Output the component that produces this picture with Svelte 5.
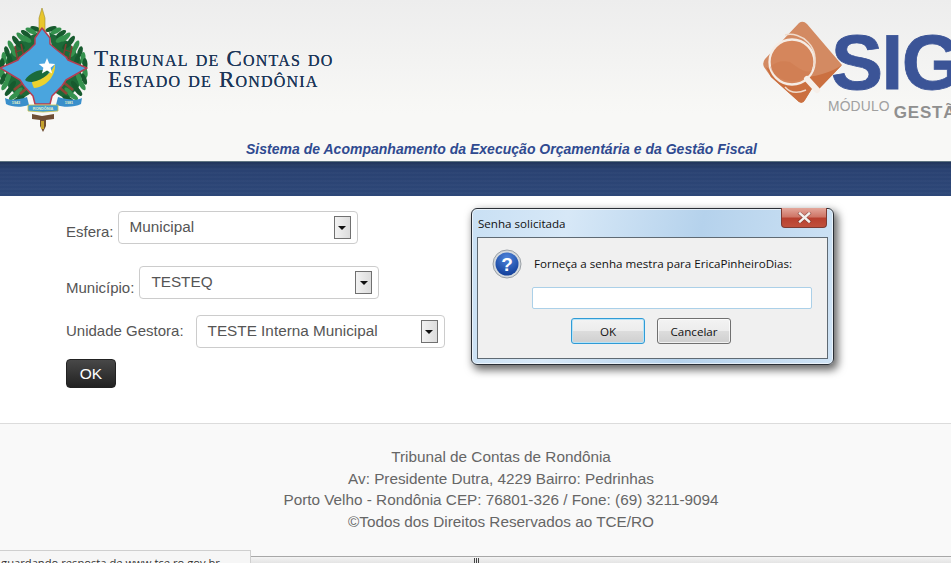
<script>
  const fields = [
    { label: 'Esfera:', value: 'Municipal', cls: 'esfera' },
    { label: 'Município:', value: 'TESTEQ', cls: 'municipio' },
    { label: 'Unidade Gestora:', value: 'TESTE Interna Municipal', cls: 'unidade' }
  ];
  const lines = [
    'Tribunal de Contas de Rondônia',
    'Av: Presidente Dutra, 4229 Bairro: Pedrinhas',
    'Porto Velho - Rondônia CEP: 76801-326 / Fone: (69) 3211-9094',
    '©Todos dos Direitos Reservados ao TCE/RO'
  ];
  // wreath leaves along the left branch; the right branch mirrors them
  const spine = [
    [36, 29, 200], [31, 31, 205], [26, 34, 215], [21, 37, 225], [16, 41, 235], [11, 46, 245],
    [7, 52, 255], [4, 58, 265], [2, 64, 272], [2, 72, 280], [3, 79, 290], [5, 85, 300],
    [9, 91, 310], [14, 96, 325], [19, 99, 335],
    [26, 39, 30], [20, 45, 40], [14, 52, 60], [10, 60, 75], [8, 78, 110], [12, 86, 125], [18, 92, 135]
  ];
</script>

{#snippet branch()}
  <path d="M38 32L18 42L6 60L6 84L20 100L36 90L30 70L36 42Z" fill="#1d6a38"/>
  {#each spine as s, i}
    <ellipse cx={s[0]} cy={s[1]} rx="6" ry="2.500" transform="rotate({s[2]} {s[0]} {s[1]})" fill={i % 2 ? '#35924e' : '#175a2e'}/>
  {/each}
  <path d="M15 46l5 26M21 44l5 22" stroke="#7d3f30" stroke-width="1.600"/>
  <path d="M15 52l7-2M16 58l7-2M17 64l7-2" stroke="#7d3f30" stroke-width="1.200"/>
  <path d="M14 90l16-13M20 94l14-12" stroke="#8d4634" stroke-width="2.600"/>
{/snippet}

<div class="page">
  <header class="head">
    <div class="brand">
      <svg class="crest" width="88" height="136" viewBox="0 0 88 136">
        {@render branch()}
        <g transform="translate(87 0) scale(-1 1)">{@render branch()}</g>
        <path d="M42 8L45 18V32H39V18Z" fill="#e8c62c" stroke="#9c8a2a" stroke-width=".6"/>
        <path d="M42 28L50 38V44L57 50L66 57L68 60L87 68L66 80L62 86L52 96L50 104H35L33 96L24 86L20 80L0 68L18 60L20 57L29 50L35 44V38Z" fill="#4aa5de" stroke="#b63c50" stroke-width="1.500" stroke-linejoin="round"/>
        <path d="M25 80C30 72 40 69 50 70C48 76 42 81 34 82C30 82 27 82 25 80Z" fill="#1b6b3b"/>
        <path d="M34 88C46 87 56 76 55 64C52 72 44 80 32 82C32 84 33 86 34 88Z" fill="#ecd22e"/>
        <path d="M47 58l2.200 5.600 6 .4-4.600 3.800 1.500 5.800-5.100-3.200-5.100 3.200 1.500-5.800-4.600-3.800 6-.4Z" fill="#fff"/>
        <path d="M5 98C10 101 18 100 27 97L29 105C20 108 12 107 6 104Z" fill="#3a8fcb"/>
        <path d="M82 98C77 101 69 100 58 97L56 105C65 108 75 107 81 104Z" fill="#3a8fcb"/>
        <text x="16" y="103.500" class="tiny">1943</text>
        <text x="69" y="103.500" class="tiny">1981</text>
        <path d="M28 105H58V111L43 112L28 111Z" fill="#3f9ed4" stroke="#c9c04a" stroke-width=".8"/>
        <text x="43" y="110" class="tiny">RONDÔNIA</text>
        <path d="M32 114L42 116L54 114V119L46 120V126L43 132L40 126V120L32 119Z" fill="#6f4e34"/>
        <path d="M41 121h3v8h-3Z" fill="#c4a22e"/>
      </svg>
      <div class="court">
        <div>Tribunal de Contas do</div>
        <div>Estado de Rondônia</div>
      </div>
    </div>
    <div class="siga">
      <svg class="mark" width="80" height="84" viewBox="0 0 80 84">
        <path d="M36 2Q40-1 44 3L79 44L55 69L50 66L42 79Q40 83 36 81L8 56L1 46Q-1 42 2 38Z" fill="#d38a62"/>
        <path d="M3 46C24 62 58 58 79 44L55 69L50 66L42 79Q40 83 36 81L8 56Z" fill="#cb7040"/>
        <circle cx="29" cy="41" r="22.500" fill="#d5865c" stroke="#f5ece5" stroke-width="2.300"/>
        <path d="M27 41A22 22 0 0 0 7 46C12 62 40 66 49 50C40 52 34 46 27 41Z" fill="#cb7444" opacity=".35"/>
        <path d="M44 58L54 69" stroke="#f6efe9" stroke-width="6" stroke-linecap="round"/>
        <path d="M22 14C38 10 58 26 50 48" fill="none" stroke="#f0dccd" stroke-width="1.500"/>
        <path d="M22 66C28 73 36 72 43 69" fill="none" stroke="#f0dccd" stroke-width="1.400"/>
      </svg>
      <div class="word">
        <div class="sig">SIGA</div>
        <div class="sub"><span class="mod">MÓDULO</span><span class="ges">GESTÃO</span></div>
      </div>
    </div>
    <div class="tagline">Sistema de Acompanhamento da Execução Orçamentária e da Gestão Fiscal</div>
  </header>
  <div class="band"></div>

  <main class="main">
    {#each fields as f}
      <div class="row {f.cls}">
        <span class="lbl">{f.label}</span>
        <div class="sel">
          <span>{f.value}</span>
          <span class="arrow"><i></i></span>
        </div>
      </div>
    {/each}
    <button class="go">OK</button>
  </main>

  <footer class="foot">
    {#each lines as l}<div>{l}</div>{/each}
  </footer>

  <div class="statusbar"><span class="grip"></span></div>
  <div class="tip">Aguardando resposta de www.tce.ro.gov.br...</div>

  <div class="dialog">
    <div class="title">
      <span>Senha solicitada</span>
      <span class="close"><svg width="15" height="11" viewBox="0 0 15 11"><path d="M3 1.500l9 8M12 1.500l-9 8" stroke="#5a2a25" stroke-width="3.600" stroke-linecap="square" opacity=".55"/><path d="M3 1.500l9 8M12 1.500l-9 8" stroke="#f4f1ee" stroke-width="2.400" stroke-linecap="square"/></svg></span>
    </div>
    <div class="panel">
      <div class="msg">
        <svg width="30" height="30" viewBox="0 0 30 30">
          <defs>
            <radialGradient id="q" cx="50%" cy="25%" r="75%"><stop offset="0" stop-color="#4f86dc"/><stop offset="1" stop-color="#123f9a"/></radialGradient>
          </defs>
          <circle cx="15" cy="15" r="14" fill="#d5dade" stroke="#9aa0a6"/>
          <circle cx="15" cy="15" r="11.500" fill="url(#q)"/>
          <text x="15" y="21.500" text-anchor="middle" class="qm">?</text>
        </svg>
        <span class="prompt">Forneça a senha mestra para EricaPinheiroDias:</span>
      </div>
      <div class="pw"></div>
      <div class="btns">
        <button class="wb def">OK</button>
        <button class="wb">Cancelar</button>
      </div>
    </div>
  </div>
</div>

<style>
  :global(body) { margin: 0; background: #fff; }
  .page {
    position: relative;
    width: 951px;
    height: 563px;
    overflow: hidden;
    font-family: "Liberation Sans", Arial, sans-serif;
    display: flex;
    flex-direction: column;
  }
  .head {
    position: relative;
    height: 162px;
    flex: none;
    background: linear-gradient(#ededed, #f8f8f6 70%);
    box-sizing: border-box;
    border-bottom: 1px solid #5f7480;
  }
  .brand { display: flex; align-items: flex-start; }
  .crest { flex: none; }
  .tiny { font: 700 3.800px "Liberation Sans", sans-serif; fill: #e6f2c8; text-anchor: middle; }
  .court {
    margin: 48px 0 0 6px;
    font-family: "Liberation Serif", serif;
    font-variant: small-caps;
    font-size: 23px;
    line-height: 21px;
    letter-spacing: 1.200px;
    color: #1c3658;
    text-shadow: 0 0 .6px #1c3658;
    white-space: nowrap;
  }
  .court div:last-child { margin-left: 14px; }
  .siga { position: absolute; left: 763px; top: 21px; display: flex; width: 260px; }
  .mark { flex: none; }
  .word { margin-left: -12px; }
  .sig {
    font-weight: 700;
    font-size: 78px;
    line-height: 66px;
    letter-spacing: -1.500px;
    color: #3b5497;
    -webkit-text-stroke: .8px #3b5497;
    margin-top: 8px;
  }
  .sub { display: flex; align-items: flex-end; margin: 4px 0 0 -3px; }
  .mod { font-size: 13.800px; line-height: 16px; margin-bottom: 7px; color: #a0a0a0; letter-spacing: .2px; }
  .ges { font-size: 17px; line-height: 18px; font-weight: 700; color: #8f8f8f; margin-left: 4px; letter-spacing: .8px; }
  .tagline {
    position: absolute;
    left: 246px;
    top: 141px;
    font-size: 14px;
    line-height: 16px;
    font-weight: 700;
    font-style: italic;
    letter-spacing: .015px;
    color: #2f4a90;
    white-space: nowrap;
  }
  .band {
    height: 34px;
    flex: none;
    background:
      repeating-linear-gradient(#0000 0 2px, rgba(255,255,255,.02) 2px 4px),
      linear-gradient(#22365b, #2a4272 25%, #2d4778);
  }
  .main {
    height: 227px;
    flex: none;
    box-sizing: border-box;
    position: relative;
    padding: 15px 0 0 66px;
    font-size: 15px;
    color: #555;
  }
  .row { display: flex; align-items: flex-end; gap: 4px; }
  .lbl { line-height: 17px; margin-bottom: 4px; white-space: nowrap; }
  .municipio { margin-top: 22px; gap: 5px; }
  .municipio .lbl { margin-bottom: 3px; }
  .unidade { margin-top: 16px; align-items: center; gap: 12px; }
  .unidade .lbl { margin-bottom: 2px; }
  .sel {
    box-sizing: border-box;
    width: 240px;
    height: 33px;
    border: 1px solid #ccc;
    border-radius: 4px;
    background: #fff;
    padding: 0 2px 2px 11px;
    display: flex;
    align-items: center;
    justify-content: space-between;
    white-space: nowrap;
    font-size: 15.300px;
  }
  .unidade .sel { width: 249px; }
  .arrow {
    box-sizing: border-box;
    width: 17px;
    height: 23px;
    margin: 2px 4px 0 0;
    border: 1px solid #707070;
    background: linear-gradient(90deg, #f2f2f2, #dcdcdc);
    display: flex;
    align-items: center;
    justify-content: center;
  }
  .arrow i {
    width: 0; height: 0;
    border: 4px solid transparent;
    border-top: 4px solid #111;
    border-bottom: 0;
  }
  .go {
    display: block;
    margin-top: 11px;
    width: 50px;
    height: 29px;
    border: 1px solid #222;
    border-radius: 4px;
    background: linear-gradient(#484848, #222);
    color: #fff;
    font: 15.500px "Liberation Sans", sans-serif;
    padding: 0;
  }
  .foot {
    flex: 1;
    box-sizing: border-box;
    background: #f9f9f9;
    border-top: 1px solid #dcdcdc;
    padding: 22px 0 0 51px;
    text-align: center;
    color: #666;
    font-size: 15.300px;
    line-height: 21.700px;
  }
  .statusbar {
    position: absolute;
    left: 0; right: 0; bottom: 0;
    height: 7px;
    background: linear-gradient(#f4f4f4, #e4e4e4);
    border-top: 1px solid #a8a8a8;
    box-sizing: border-box;
  }
  .grip {
    position: absolute;
    left: 474px;
    top: 1px;
    width: 5px;
    height: 5px;
    background: repeating-linear-gradient(90deg, #444 0 1px, #0000 1px 2px);
  }
  .tip {
    position: absolute;
    left: -7px;
    top: 550px;
    width: 258px;
    height: 20px;
    box-sizing: border-box;
    background: #f6f6f6;
    border: 1px solid #cfcfcf;
    font: 11.200px "Open Sans", "DejaVu Sans", sans-serif;
    line-height: 20px;
    padding-top: 2px;
    color: #333;
    white-space: nowrap;
    overflow: hidden;
  }
  .dialog {
    position: absolute;
    left: 471px;
    top: 208px;
    width: 363px;
    height: 157px;
    box-sizing: border-box;
    border: 1px solid #2a2f36;
    border-radius: 6px;
    background: linear-gradient(100deg, #c9e0f4 0%, #d7e8f7 25%, #b5d2ec 60%, #cfe3f5 100%);
    box-shadow: 3px 4px 8px 1px rgba(0,0,0,.6), inset 0 0 0 1px rgba(255,255,255,.6);
    padding: 0 5px 5px;
    display: flex;
    flex-direction: column;
    font-family: "Open Sans", "DejaVu Sans", sans-serif;
    font-size: 11.600px;
    color: #111;
  }
  .title {
    height: 28px;
    flex: none;
    display: flex;
    align-items: center;
    padding: 0 0 0 1px;
    position: relative;
  }
  .close {
    position: absolute;
    right: 1px;
    top: -1px;
    width: 46px;
    height: 20px;
    box-sizing: border-box;
    border: 1px solid #7c3a32;
    border-top: 0;
    border-radius: 0 0 4px 4px;
    background: linear-gradient(#e3a79b, #cf7768 45%, #b8402f 55%, #c0503c);
    display: flex;
    align-items: center;
    justify-content: center;
  }
  .panel {
    flex: 1;
    box-sizing: border-box;
    background: #f0f0f0;
    border: 1px solid #5f6a73;
    padding: 10px 14px 0;
  }
  .msg { display: flex; align-items: center; gap: 12px; height: 32px; }
  .prompt { margin-bottom: 2px; }
  .qm { font: 700 19px "Liberation Sans", sans-serif; fill: #fff; }
  .pw {
    box-sizing: border-box;
    margin: 7px 0 0 40px;
    width: 280px;
    height: 22px;
    background: #fff;
    border: 1px solid #abd0e8;
    border-radius: 2px;
  }
  .btns { display: flex; gap: 12px; margin: 9px 0 0 79px; }
  .wb {
    box-sizing: border-box;
    width: 74px;
    height: 26px;
    padding: 0;
    border: 1px solid #707070;
    border-radius: 3px;
    background: linear-gradient(#f3f3f3 0, #ececec 48%, #dcdcdc 52%, #cfcfcf 100%);
    font: 11.600px "Open Sans", "DejaVu Sans", sans-serif;
    color: #111;
    box-shadow: inset 0 0 0 1px rgba(255,255,255,.7);
  }
  .def { border-color: #2f9bd6; box-shadow: inset 0 0 0 1px #b7e3f7; }
</style>
